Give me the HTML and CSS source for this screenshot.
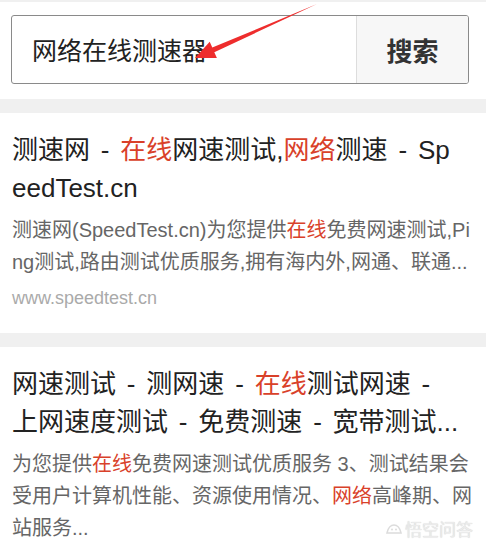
FILE: index.html
```html
<!DOCTYPE html>
<html lang="zh-CN">
<head>
<meta charset="utf-8">
<title>网络在线测速器 - 搜索</title>
<link rel="stylesheet" href="styles.css">
</head>
<body>
<div class="page">
  <header class="search-area">
    <form class="search-box">
      <div class="search-input">网络在线测速器</div>
      <button type="button" class="search-btn">搜索</button>
    </form>
  </header>

  <div class="sep"></div>

  <article class="result">
    <h2 class="result-title">测速网 - <em>在线</em>网速测试,<em>网络</em>测速 - SpeedTest.cn</h2>
    <p class="result-desc">测速网(SpeedTest.cn)为您提供<em>在线</em>免费网速测试,Ping测试,路由测试优质服务,拥有海内外,网通、联通...</p>
    <div class="result-url">www.speedtest.cn</div>
  </article>

  <div class="sep"></div>

  <article class="result">
    <h2 class="result-title">网速测试 - 测网速 - <em>在线</em>测试网速 - 上网速度测试 - 免费测速 - 宽带测试...</h2>
    <p class="result-desc">为您提供<em>在线</em>免费网速测试优质服务 3、测试结果会受用户计算机性能、资源使用情况、<em>网络</em>高峰期、网站服务...</p>
  </article>

  <svg class="arrow" width="486" height="80" viewBox="0 0 486 80" aria-hidden="true">
    <polygon points="195,58 209.7,41.7 212.3,47.6 317,4 214.3,52.2 216.9,58.1" fill="#ee2d2d"/>
  </svg>

  <div class="watermark">
    <svg class="wm-icon" width="16" height="12" viewBox="0 0 16 12" aria-hidden="true">
      <path d="M1 10 C2 5 5 2 8 2 C11 2 14 5 15 10 Z" fill="none" stroke="#dcdcdc" stroke-width="1.6"/>
      <circle cx="6" cy="6.5" r="1" fill="#dcdcdc"/>
      <circle cx="10" cy="6.5" r="1" fill="#dcdcdc"/>
    </svg>
    <span>悟空问答</span>
  </div>
</div>
</body>
</html>
```
FILE: styles.css
```css
* { box-sizing: border-box; }

html, body {
  margin: 0;
  padding: 0;
  background: #ffffff;
}

body {
  font-family: "Liberation Sans", "Noto Sans CJK SC", sans-serif;
  color: #222222;
}

.page {
  position: relative;
  width: 486px;
  height: 545px;
  overflow: hidden;
  border-top: 2px solid #f0f0f0;
}

.search-area {
  padding: 13px 17px 15px 11px;
}

.search-box {
  display: flex;
  height: 69px;
  margin: 0;
  border: 1px solid #8a8a8a;
  border-radius: 3px;
  overflow: hidden;
}

.search-input {
  flex: 1;
  display: flex;
  align-items: center;
  padding-left: 20px;
  font-family: "Noto Sans CJK SC", sans-serif;
  font-size: 25px;
  color: #222222;
  line-height: 1;
}

.search-btn {
  width: 112px;
  border: 0;
  border-left: 1px solid #dddddd;
  background: #f7f7f7;
  font-family: "Noto Sans CJK SC", sans-serif;
  font-size: 26px;
  font-weight: 700;
  color: #333333;
  padding: 0;
}

.sep {
  height: 14px;
  background: #f0f0f0;
}

.result {
  padding: 18px 12px 23px 12px;
}

.result em {
  font-style: normal;
  color: #d9412a;
}

.result-title {
  margin: 0;
  padding-right: 13px;
  font-size: 26px;
  font-weight: 400;
  line-height: 38px;
  word-spacing: 3.6px;
  color: #222222;
  word-break: break-all;
}

.result-desc {
  margin: 7px 0 0 0;
  font-size: 20px;
  line-height: 32px;
  color: #666666;
  word-break: break-all;
}

.result-url {
  margin-top: 8px;
  font-size: 18px;
  line-height: 24px;
  color: #aaaaaa;
}

.arrow {
  position: absolute;
  left: 0;
  top: -2px;
}

.watermark {
  position: absolute;
  left: 386px;
  top: 516px;
  display: flex;
  align-items: center;
  gap: 3px;
  font-family: "Noto Sans CJK SC", sans-serif;
  font-size: 17px;
  line-height: 22px;
  color: #ebebeb;
  text-shadow: 0 0 1px #c8c8c8;
}
```
